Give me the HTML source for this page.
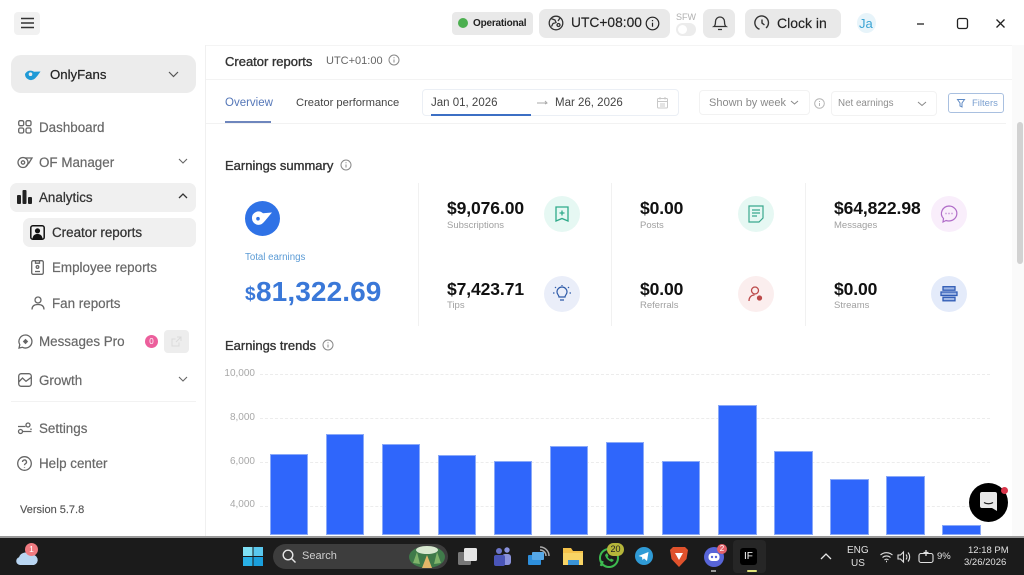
<!DOCTYPE html>
<html><head><meta charset="utf-8"><style>
*{box-sizing:border-box}
html,body{margin:0;padding:0;width:1024px;height:575px;overflow:hidden;background:#fff;font-family:"Liberation Sans",sans-serif}
#r{position:relative;width:1024px;height:575px;overflow:hidden;filter:blur(.25px)}
.a,.t{position:absolute}
.t{white-space:nowrap;line-height:1}
svg{position:absolute;fill:none;overflow:visible}
.nav{font-size:13.4px;color:#686868;font-weight:400;-webkit-text-stroke:.2px #686868}
.ic{stroke:#666;stroke-width:1.3}
.val{font-size:17.5px;font-weight:700;color:#111;letter-spacing:-.1px}
.lab{font-size:9.5px;color:#a0a0a0}
.circ{position:absolute;width:36px;height:36px;border-radius:50%}
.bar{position:absolute;width:38px;background:#2f66fb;bottom:40px;outline:1px solid #8aa9f8;outline-offset:-1px}
.grid{position:absolute;left:260px;width:730px;border-top:1px dashed #ececec}
.yl{position:absolute;right:769px;font-size:10px;color:#a8a8a8;line-height:1}
.g{background:#e9e9e9;border-radius:7px;position:absolute}
</style></head><body><div id="r">

<!-- sidebar structure -->
<div class="a" style="left:205px;top:45px;width:1px;height:492px;background:#f0f0f0"></div>
<div class="a" style="left:206px;top:79px;width:806px;height:1px;background:#f3f3f3"></div>
<div class="a" style="left:206px;top:45px;width:818px;height:1px;background:#f4f4f4"></div>

<!-- hamburger -->
<div class="a" style="left:14px;top:12px;width:26px;height:23px;background:#f1f1f1;border-radius:4px"></div>
<svg style="left:0;top:0" width="60" height="40"><path d="M21 18.500h13M21 23h13M21 27.500h13" stroke="#333" stroke-width="1.500"/></svg>

<!-- account selector -->
<div class="a" style="left:11px;top:55px;width:185px;height:38px;background:#ececec;border-radius:10px"></div>
<svg style="left:24px;top:67px" width="18" height="14"><path d="M1 7a6 6 0 0 0 10 4.500C13 9.500 14 8 16.500 4.500L10 4.800A6 6 0 0 0 1 7z" fill="#1f9ad6"/><circle cx="6.500" cy="7.200" r="1.800" fill="#ececec"/></svg>
<div class="t" style="left:50px;top:68px;font-size:13.200px;color:#222;-webkit-text-stroke:.2px #222">OnlyFans</div>
<svg style="left:168px;top:71px" width="12" height="8"><path d="M1 1l4.500 4.500L10 1" stroke="#555" stroke-width="1.200"/></svg>

<!-- nav -->
<svg class="ic" style="left:18px;top:120px" width="14" height="14"><rect x=".7" y=".7" width="5" height="5" rx="1.500"/><rect x="8" y=".7" width="5" height="5" rx="1.500"/><rect x=".7" y="8" width="5" height="5" rx="1.500"/><rect x="8" y="8" width="5" height="5" rx="1.500"/></svg>
<div class="t nav" style="left:39px;top:120.500px">Dashboard</div>
<svg class="ic" style="left:17px;top:155px" width="16" height="14"><circle cx="6" cy="7.500" r="5"/><circle cx="6" cy="7.500" r="1.700"/><path d="M8 3h7l-3 5-3 3"/></svg>
<div class="t nav" style="left:39px;top:155.500px">OF Manager</div>
<svg style="left:178px;top:158px" width="10" height="7"><path d="M1 1l4 4 4-4" stroke="#666" stroke-width="1.100"/></svg>

<div class="a" style="left:10px;top:183px;width:186px;height:29px;background:#f0f0f0;border-radius:7px"></div>
<svg style="left:17px;top:190px" width="16" height="14"><rect x="0" y="5" width="4" height="9" rx="1" fill="#222"/><rect x="5.500" y="0" width="4" height="14" rx="1" fill="#222"/><rect x="11" y="7" width="4" height="7" rx="1" fill="#222"/></svg>
<div class="t nav" style="left:39px;top:190.500px;color:#333;-webkit-text-stroke:.25px #333">Analytics</div>
<svg style="left:178px;top:193px" width="10" height="7"><path d="M1 5l4-4 4 4" stroke="#333" stroke-width="1.300"/></svg>

<div class="a" style="left:23px;top:218px;width:173px;height:29px;background:#f0f0f0;border-radius:7px"></div>
<svg style="left:30px;top:225px" width="15" height="15"><rect x=".8" y=".8" width="13.400" height="13.400" rx="2" stroke="#111" stroke-width="1.500"/><circle cx="7.500" cy="5.800" r="2.600" fill="#111"/><path d="M2.500 13.500c.5-3.500 2.500-4.500 5-4.500s4.500 1 5 4.500z" fill="#111"/></svg>
<div class="t nav" style="left:52px;top:225.500px;color:#333;-webkit-text-stroke:.25px #333">Creator reports</div>

<svg class="ic" style="left:31px;top:260px" width="13" height="15"><rect x=".7" y=".7" width="11.600" height="13.600" rx="1.500"/><path d="M4.500.7v2.500h4V.7"/><circle cx="6.500" cy="7" r="1.300"/><path d="M4 11.500h5"/></svg>
<div class="t nav" style="left:52px;top:261px">Employee reports</div>
<svg class="ic" style="left:31px;top:296px" width="14" height="14"><circle cx="7" cy="4" r="3"/><path d="M1 13.500c0-3.500 2.500-5 6-5s6 1.500 6 5"/></svg>
<div class="t nav" style="left:52px;top:296.500px">Fan reports</div>

<svg class="ic" style="left:18px;top:334px" width="15" height="15"><path d="M7.500 1a6.500 6.500 0 1 1-3 12.300L1 14l.8-3.300A6.500 6.500 0 0 1 7.500 1z"/><path d="M7.500 4.800l2.700 2.700-2.700 2.700-2.700-2.700z" fill="#666" stroke="none"/></svg>
<div class="t nav" style="left:39px;top:334.500px">Messages Pro</div>
<div class="a" style="left:145px;top:335px;width:13px;height:13px;border-radius:50%;background:#ec5f9c;color:#fff;font-size:8px;text-align:center;line-height:13px">0</div>
<div class="a" style="left:164px;top:330px;width:25px;height:23px;background:#ededed;border-radius:4px"></div>
<svg style="left:171px;top:336px" width="11" height="11"><path d="M8 6.500V10H1V3h3.500M6 1h4v4M10 1L5 6" stroke="#dadada" stroke-width="1"/></svg>

<svg class="ic" style="left:18px;top:373px" width="14" height="14"><rect x=".7" y=".7" width="12.600" height="12.600" rx="2.500"/><path d="M.7 9l3.800-4 3.500 3.300 5-3.800"/></svg>
<div class="t nav" style="left:39px;top:373.500px">Growth</div>
<svg style="left:178px;top:376px" width="10" height="7"><path d="M1 1l4 4 4-4" stroke="#666" stroke-width="1.100"/></svg>
<div class="a" style="left:11px;top:401px;width:185px;height:1px;background:#f2f2f2"></div>

<svg class="ic" style="left:18px;top:422px" width="14" height="13"><path d="M0 4.500h7.500M13 6.500V8M5 9.500h8.500"/><circle cx="10" cy="3" r="2"/><circle cx="2.500" cy="9.500" r="2"/></svg>
<div class="t nav" style="left:39px;top:422px">Settings</div>
<svg class="ic" style="left:17px;top:456px" width="15" height="15"><circle cx="7.500" cy="7.500" r="6.800"/><path d="M5.500 6a2 2 0 1 1 3 1.700c-.7.400-1 .8-1 1.500M7.500 11v.6"/></svg>
<div class="t nav" style="left:39px;top:457px">Help center</div>
<div class="t" style="left:20px;top:504.500px;font-size:11px;color:#555;-webkit-text-stroke:.15px #555">Version 5.7.8</div>

<!-- header -->
<div class="g" style="left:452px;top:12px;width:81px;height:23px;border-radius:4px"></div>
<div class="a" style="left:458px;top:18px;width:10px;height:10px;border-radius:50%;background:#4caf50"></div>
<div class="t" style="left:473px;top:18.500px;font-size:10px;font-weight:700;color:#222;letter-spacing:-.2px">Operational</div>
<div class="g" style="left:539px;top:9px;width:131px;height:29px"></div>
<svg style="left:548px;top:15px" width="16" height="16" stroke="#333" stroke-width="1.300"><circle cx="8" cy="8" r="6.800"/><path d="M3 3.500l4 1.500 1 2.500-3 1-1.500 3M12 3l-2 3M9 10a1.500 1.500 0 1 0 3 0 1.500 1.500 0 1 0-3 0"/></svg>
<div class="t" style="left:571px;top:16px;font-size:13.800px;color:#222;-webkit-text-stroke:.15px #222">UTC+08:00</div>
<svg style="left:645px;top:15.500px" width="15" height="15" stroke="#222" stroke-width="1.200"><circle cx="7.500" cy="7.500" r="6.300"/><path d="M7.500 6.800v4M7.500 4v1.200"/></svg>
<div class="t" style="left:676px;top:12.500px;font-size:9px;color:#b0b0b0">SFW</div>
<div class="a" style="left:676px;top:23px;width:20px;height:13px;border-radius:7px;background:#ececec"></div>
<div class="a" style="left:678px;top:25px;width:9px;height:9px;border-radius:50%;background:#fff"></div>
<div class="g" style="left:703px;top:9px;width:32px;height:29px"></div>
<svg style="left:713px;top:15px" width="14" height="16" stroke="#333" stroke-width="1.300"><path d="M1 11.500c1.500-1 1.500-3 1.500-5a4.500 4.500 0 0 1 9 0c0 2 0 4 1.500 5zM5 14.500h4"/></svg>
<div class="g" style="left:745px;top:9px;width:96px;height:29px"></div>
<svg style="left:754px;top:15px" width="16" height="16" stroke="#333" stroke-width="1.400"><path d="M5.500 14.200A6.800 6.800 0 1 1 12 13M8 4.500V8l2.500 2"/></svg>
<div class="t" style="left:777px;top:16px;font-size:14px;color:#222;-webkit-text-stroke:.15px #222">Clock in</div>
<div class="a" style="left:857px;top:13px;width:19px;height:20px;border-radius:50%;background:#e7f4fa"></div>
<div class="t" style="left:859px;top:17px;font-size:13px;color:#3aa4d4">Ja</div>
<svg style="left:910px;top:16px" width="100" height="16" stroke="#222" stroke-width="1.300"><path d="M7 8h7"/><rect x="47.500" y="2.500" width="10" height="10" rx="2"/><path d="M86.500 3.500l8 8M94.500 3.500l-8 8"/></svg>

<!-- page title -->
<div class="t" style="left:225px;top:55px;font-size:13px;color:#333;font-weight:400;-webkit-text-stroke:.35px #333">Creator reports</div>
<div class="t" style="left:326px;top:56px;font-size:11px;color:#666">UTC+01:00</div>
<svg style="left:388px;top:54px" width="12" height="12" stroke="#888" stroke-width="1"><circle cx="6" cy="6" r="5"/><path d="M6 5.500v3M6 3.200v1"/></svg>

<!-- tabs -->
<div class="t" style="left:225px;top:98px;font-size:11.500px;color:#5577b8">Overview</div>
<div class="a" style="left:206px;top:122.500px;width:800px;height:1px;background:#f2f2f2"></div>
<div class="a" style="left:225px;top:120.500px;width:46px;height:2px;background:#6e86bd"></div>
<div class="t" style="left:296px;top:98px;font-size:11.200px;color:#444">Creator performance</div>
<div class="a" style="left:422px;top:89px;width:257px;height:27px;border:1px solid #ebeff5;border-radius:4px"></div>
<div class="a" style="left:431px;top:114px;width:100px;height:1.500px;background:#3c6fc4"></div>
<div class="t" style="left:431px;top:98px;font-size:11.500px;color:#444">Jan 01, 2026</div>
<svg style="left:537px;top:100px" width="12" height="6" stroke="#aaa" stroke-width="1"><path d="M0 3h10M8 1l2 2-2 1"/></svg>
<div class="t" style="left:555px;top:98px;font-size:11.500px;color:#444">Mar 26, 2026</div>
<svg style="left:657px;top:97px" width="11" height="12" stroke="#c8c8c8" stroke-width="1"><rect x=".5" y="1.500" width="10" height="9.500" rx="1"/><path d="M.5 4.500h10M3 0v2.500M8 0v2.500M3 7h5M3 9h5"/></svg>
<div class="a" style="left:699px;top:90px;width:111px;height:25px;border:1px solid #f2f2f2;border-radius:4px"></div>
<div class="t" style="left:709px;top:98px;font-size:11px;color:#8a8a8a">Shown by week</div>
<svg style="left:790px;top:100px" width="9" height="6" stroke="#888" stroke-width="1"><path d="M1 1l3.500 3L8 1"/></svg>
<svg style="left:814px;top:98px" width="12" height="12" stroke="#b5b5b5" stroke-width="1"><circle cx="5.500" cy="5.500" r="4.800"/><path d="M5.500 5v3M5.500 3v1"/></svg>
<div class="a" style="left:831px;top:91px;width:106px;height:25px;border:1px solid #f2f2f2;border-radius:4px"></div>
<div class="t" style="left:838px;top:98.500px;font-size:9.800px;color:#8e8e8e">Net earnings</div>
<svg style="left:917px;top:101px" width="10" height="6" stroke="#888" stroke-width="1"><path d="M1 1l4 3.500L9 1"/></svg>
<div class="a" style="left:948px;top:93px;width:56px;height:20px;border:1px solid #a9c0e0;border-radius:3px"></div>
<svg style="left:957px;top:99px" width="9" height="9" stroke="#5f8ac4" stroke-width="1"><path d="M.5.500h7L5 4v4L3 7V4z"/></svg>
<div class="t" style="left:972px;top:98.500px;font-size:9.500px;color:#7ba0d0">Filters</div>

<!-- earnings summary -->
<div class="t" style="left:225px;top:159px;font-size:13px;color:#333;-webkit-text-stroke:.35px #333">Earnings summary</div>
<svg style="left:340px;top:159px" width="12" height="12" stroke="#888" stroke-width="1"><circle cx="6" cy="6" r="5"/><path d="M6 5.500v3M6 3.200v1"/></svg>

<div class="a" style="left:245px;top:201px;width:35px;height:35px;border-radius:50%;background:#2f72e6"></div>
<svg style="left:251px;top:209px" width="24" height="20"><path d="M1 9.500a6.500 6.500 0 0 0 11.500 4C15 11 17 8 21 3.500l-9 .8A6.500 6.500 0 0 0 1 9.500z" fill="#fff"/><circle cx="7" cy="9.700" r="1.800" fill="#2f72e6"/></svg>
<div class="t" style="left:245px;top:252.500px;font-size:9.700px;color:#5b9bd5">Total earnings</div>
<div class="t" style="left:245px;top:285px;font-size:19px;font-weight:700;color:#3a78d8">$</div>
<div class="t" style="left:256px;top:278px;font-size:28px;font-weight:700;color:#3a78d8;letter-spacing:.1px">81,322.69</div>

<div class="a" style="left:418px;top:183px;width:1px;height:143px;background:#f1f1f1"></div>
<div class="a" style="left:611px;top:183px;width:1px;height:143px;background:#f1f1f1"></div>
<div class="a" style="left:805px;top:183px;width:1px;height:143px;background:#f1f1f1"></div>

<div class="t val" style="left:447px;top:200px">$9,076.00</div><div class="t lab" style="left:447px;top:221px">Subscriptions</div>
<div class="circ" style="left:544px;top:196px;background:#e6f8f3"></div>
<svg style="left:555px;top:206px" width="14" height="16" stroke="#2faa8a" stroke-width="1.300"><path d="M1 1h12v14l-6-2.500L1 15zM7 4.500v5M4.500 7h5"/></svg>
<div class="t val" style="left:447px;top:281px">$7,423.71</div><div class="t lab" style="left:447px;top:301px">Tips</div>
<div class="circ" style="left:544px;top:276px;background:#eaeef9"></div>
<svg style="left:553px;top:285px" width="18" height="18" stroke="#2d5aa8" stroke-width="1.200"><path d="M6 12c0-2-2-2.500-2-5a5 5 0 0 1 10 0c0 2.500-2 3-2 5zM7 15h4M9 0v1M2 2l1 1M16 2l-1 1M0 8h1.500M18 8h-1.500"/></svg>

<div class="t val" style="left:640px;top:200px">$0.00</div><div class="t lab" style="left:640px;top:221px">Posts</div>
<div class="circ" style="left:738px;top:196px;background:#e6f8f3"></div>
<svg style="left:748px;top:205px" width="16" height="18" stroke="#3aa88e" stroke-width="1.200"><path d="M1 1h14v12l-4 4H1zM4 5h8M4 8h8M4 11h5"/></svg>
<div class="t val" style="left:640px;top:281px">$0.00</div><div class="t lab" style="left:640px;top:301px">Referrals</div>
<div class="circ" style="left:738px;top:276px;background:#fbeeee"></div>
<svg style="left:748px;top:286px" width="16" height="16" stroke="#bc4a4a" stroke-width="1.300"><circle cx="7" cy="4.500" r="3.500"/><path d="M1 15c0-3.500 2-6 5.500-6"/><circle cx="11.500" cy="12" r="2" fill="#bc4a4a"/></svg>

<div class="t val" style="left:834px;top:200px">$64,822.98</div><div class="t lab" style="left:834px;top:221px">Messages</div>
<div class="circ" style="left:931px;top:196px;background:#f9eefb"></div>
<svg style="left:940px;top:205px" width="18" height="18" stroke="#b06cc8" stroke-width="1.200"><path d="M9 1a8 7.500 0 1 1-3 14.500L3 17l.5-3.500A8 7.500 0 0 1 9 1z"/><path d="M5.500 8.500h1M8.500 8.500h1M11.500 8.500h1" stroke-width="1.500"/></svg>
<div class="t val" style="left:834px;top:281px">$0.00</div><div class="t lab" style="left:834px;top:301px">Streams</div>
<div class="circ" style="left:931px;top:276px;background:#e4ebfa"></div>
<svg style="left:940px;top:286px" width="18" height="16" stroke="#2f5bb5" stroke-width="1.300"><rect x="3" y=".7" width="12" height="3.500" fill="#9fb7e6"/><rect x="1" y="6" width="16" height="3.500" fill="#9fb7e6"/><rect x="3" y="11.300" width="12" height="3.500" fill="#9fb7e6"/></svg>

<!-- scrollbar -->
<div class="a" style="left:1012px;top:45px;width:12px;height:492px;background:#fafafa"></div>
<div class="a" style="left:1017px;top:122px;width:6px;height:142px;background:#d2d2d2;border-radius:3px"></div>

<!-- chart -->
<div class="t" style="left:225px;top:339px;font-size:13px;color:#333;-webkit-text-stroke:.35px #333">Earnings trends</div>
<svg style="left:322px;top:339px" width="12" height="12" stroke="#888" stroke-width="1"><circle cx="6" cy="6" r="5"/><path d="M6 5.500v3M6 3.200v1"/></svg>
<div class="yl" style="top:368.500px">10,000</div><div class="yl" style="top:412.500px">8,000</div><div class="yl" style="top:456.500px">6,000</div><div class="yl" style="top:500px">4,000</div>
<div class="grid" style="top:374px"></div><div class="grid" style="top:418px"></div><div class="grid" style="top:462px"></div><div class="grid" style="top:506px"></div>
<div class="bar" style="left:270px;top:454px"></div>
<div class="bar" style="left:326px;top:434px"></div>
<div class="bar" style="left:382px;top:444px"></div>
<div class="bar" style="left:438px;top:455px"></div>
<div class="bar" style="left:494px;top:461px"></div>
<div class="bar" style="left:550px;top:446px"></div>
<div class="bar" style="left:606px;top:442px"></div>
<div class="bar" style="left:662px;top:461px"></div>
<div class="bar" style="left:718px;top:405px;width:39px"></div>
<div class="bar" style="left:774px;top:451px;width:39px"></div>
<div class="bar" style="left:830px;top:479px;width:39px"></div>
<div class="bar" style="left:886px;top:476px;width:39px"></div>
<div class="bar" style="left:942px;top:525px;width:39px"></div>

<!-- chat bubble -->
<div class="a" style="left:969px;top:483px;width:39px;height:39px;border-radius:50%;background:#000"></div>
<div class="a" style="left:1001px;top:487px;width:7px;height:7px;border-radius:50%;background:#d9354a"></div>
<svg style="left:980px;top:492px" width="17" height="20"><path d="M2 0h13a2 2 0 0 1 2 2v17l-5-3H2a2 2 0 0 1-2-2V2a2 2 0 0 1 2-2z" fill="#e8e8e8"/><path d="M4 10.500c2.500 1.700 6.500 1.700 9 0" stroke="#222" stroke-width="1.200"/></svg>

<!-- taskbar -->
<div class="a" style="left:0;top:536px;width:1024px;height:1.500px;background:#999"></div>
<div class="a" style="left:0;top:537.500px;width:1024px;height:37.500px;background:#1b1b1b"></div>
<svg style="left:16px;top:548px" width="21" height="18"><path d="M4 17a4 4 0 0 1-1-7.800A7 7 0 0 1 15 7a5 5 0 0 1 3 10z" fill="#b9d6f2"/></svg>
<div class="a" style="left:25px;top:543px;width:13px;height:13px;border-radius:50%;background:#ef7a80;color:#fff;font-size:8.500px;text-align:center;line-height:13px">1</div>
<svg style="left:243px;top:547px" width="20" height="19"><rect x="0" y="0" width="9.500" height="9" fill="#7fe0f5"/><rect x="10.500" y="0" width="9.500" height="9" fill="#5ac8ee"/><rect x="0" y="10" width="9.500" height="9" fill="#29b0e6"/><rect x="10.500" y="10" width="9.500" height="9" fill="#1a9fdc"/></svg>
<div class="a" style="left:273px;top:544px;width:175px;height:25px;border-radius:13px;background:#3d3d3d"></div>
<svg style="left:282px;top:549px" width="15" height="15" stroke="#e6e6e6" stroke-width="1.400"><circle cx="6" cy="6" r="4.800"/><path d="M9.500 9.500l4 4"/></svg>
<div class="t" style="left:302px;top:551px;font-size:11px;color:#cfcfcf">Search</div>
<svg style="left:408px;top:545px" width="38" height="24"><ellipse cx="19" cy="12" rx="18" ry="11" fill="#3f7a4a"/><ellipse cx="19" cy="5" rx="11" ry="4" fill="#d8e8d0"/><path d="M5 18L9 7l3 12zM33 18L29 7l-3 12z" fill="#7fb36a"/><path d="M14 23l5-13 5 13z" fill="#e3b669"/></svg>
<svg style="left:458px;top:547px" width="20" height="19"><rect x="0" y="5" width="13" height="13" rx="1.500" fill="#777"/><rect x="6" y="1" width="13" height="13" rx="1.500" fill="#e6e6e6"/></svg>
<svg style="left:493px;top:546px" width="19" height="21"><circle cx="6" cy="5" r="3" fill="#6c75c9"/><circle cx="14" cy="4" r="2.700" fill="#8a92dd"/><rect x="9" y="8" width="9" height="11" rx="3" fill="#8a92dd"/><rect x="1" y="9" width="11" height="11" rx="2" fill="#4a55b8"/></svg>
<svg style="left:528px;top:547px" width="20" height="19"><rect x="0" y="8" width="13" height="10" rx="1" fill="#2e8fdc"/><rect x="4" y="5" width="12" height="8" rx="1" fill="#56a8e8"/><path d="M12 3a6 6 0 0 1 6 6M12 0a9 9 0 0 1 9 9" stroke="#aaa" stroke-width="1.500"/></svg>
<svg style="left:563px;top:547px" width="20" height="19"><path d="M0 1h8l2 3h10v14H0z" fill="#f5c24a"/><rect x="0" y="6" width="20" height="12" fill="#f8d465"/><rect x="5" y="13" width="11" height="5" fill="#3a93d6"/></svg>
<svg style="left:598px;top:546px" width="22" height="22"><circle cx="11" cy="12" r="9" stroke="#3dbb4f" stroke-width="2"/><path d="M3 20l1.500-5" stroke="#3dbb4f" stroke-width="2.500"/><path d="M7 9c1 4 4 6 7 7l2-2-3-1.500-1 1-2.500-2.500 1-1L9 7z" fill="#3dbb4f"/></svg>
<div class="a" style="left:607px;top:543px;width:17px;height:13px;border-radius:7px;background:#b5b53a;color:#222;font-size:9px;text-align:center;line-height:13px">20</div>
<svg style="left:635px;top:547px" width="18" height="18"><circle cx="9" cy="9" r="9" fill="#2f9bd6"/><path d="M3.500 9l10-4-1.500 9-3-2.500-1.500 1.500-.5-3z" fill="#fff"/></svg>
<svg style="left:670px;top:546px" width="18" height="21"><path d="M3 1h12l3 3-1.500 9L9 21 1.500 13 0 4z" fill="#e0522c"/><path d="M5 7h8l-4 7z" fill="#fff"/></svg>
<svg style="left:704px;top:547px" width="20" height="20"><circle cx="10" cy="10" r="10" fill="#5865d8"/><rect x="4.500" y="6" width="11" height="8" rx="3.500" fill="#fff"/><circle cx="8" cy="10" r="1.200" fill="#5865d8"/><circle cx="12" cy="10" r="1.200" fill="#5865d8"/></svg>
<div class="a" style="left:717px;top:544px;width:10px;height:10px;border-radius:50%;background:#e36068;color:#fff;font-size:8px;text-align:center;line-height:10px">2</div>
<div class="a" style="left:711px;top:570px;width:5px;height:1.500px;background:#999"></div>
<div class="a" style="left:733px;top:540px;width:33px;height:33px;background:#262626;border-radius:4px"></div>
<div class="a" style="left:740px;top:548px;width:17px;height:17px;background:#000;border-radius:3px"></div>
<div class="t" style="left:744px;top:552px;font-size:10px;color:#fff">IF</div>
<div class="a" style="left:747px;top:570px;width:10px;height:2px;background:#dfe27a;border-radius:1px"></div>
<svg style="left:820px;top:553px" width="12" height="7" stroke="#e6e6e6" stroke-width="1.300"><path d="M1 6l5-5 5 5"/></svg>
<div class="t" style="left:847px;top:546px;font-size:10px;color:#e0e0e0">ENG</div>
<div class="t" style="left:851px;top:558.500px;font-size:10px;color:#e0e0e0">US</div>
<svg style="left:880px;top:550px" width="60" height="14" stroke="#e0e0e0" stroke-width="1.100"><path d="M.5 5a9 9 0 0 1 12 0M2.500 7.500a6 6 0 0 1 8 0M4.500 10a3 3 0 0 1 4 0"/><path d="M6 11.500h1" stroke-width="1.500"/><path d="M18 5h2.500l3-3v10l-3-3H18zM26 4.500a4 4 0 0 1 0 5M28 2.500a7 7 0 0 1 0 9"/><rect x="39" y="3.500" width="14" height="9" rx="2"/><path d="M46 0v6M43.500 2.500H48.500" stroke-width="1.300"/></svg>
<div class="t" style="left:937px;top:552px;font-size:9.500px;color:#e0e0e0">9%</div>
<div class="t" style="left:968px;top:545.500px;font-size:9.500px;color:#e0e0e0">12:18 PM</div>
<div class="t" style="left:964px;top:557.500px;font-size:9.500px;color:#e0e0e0">3/26/2026</div>
</div></body></html>
